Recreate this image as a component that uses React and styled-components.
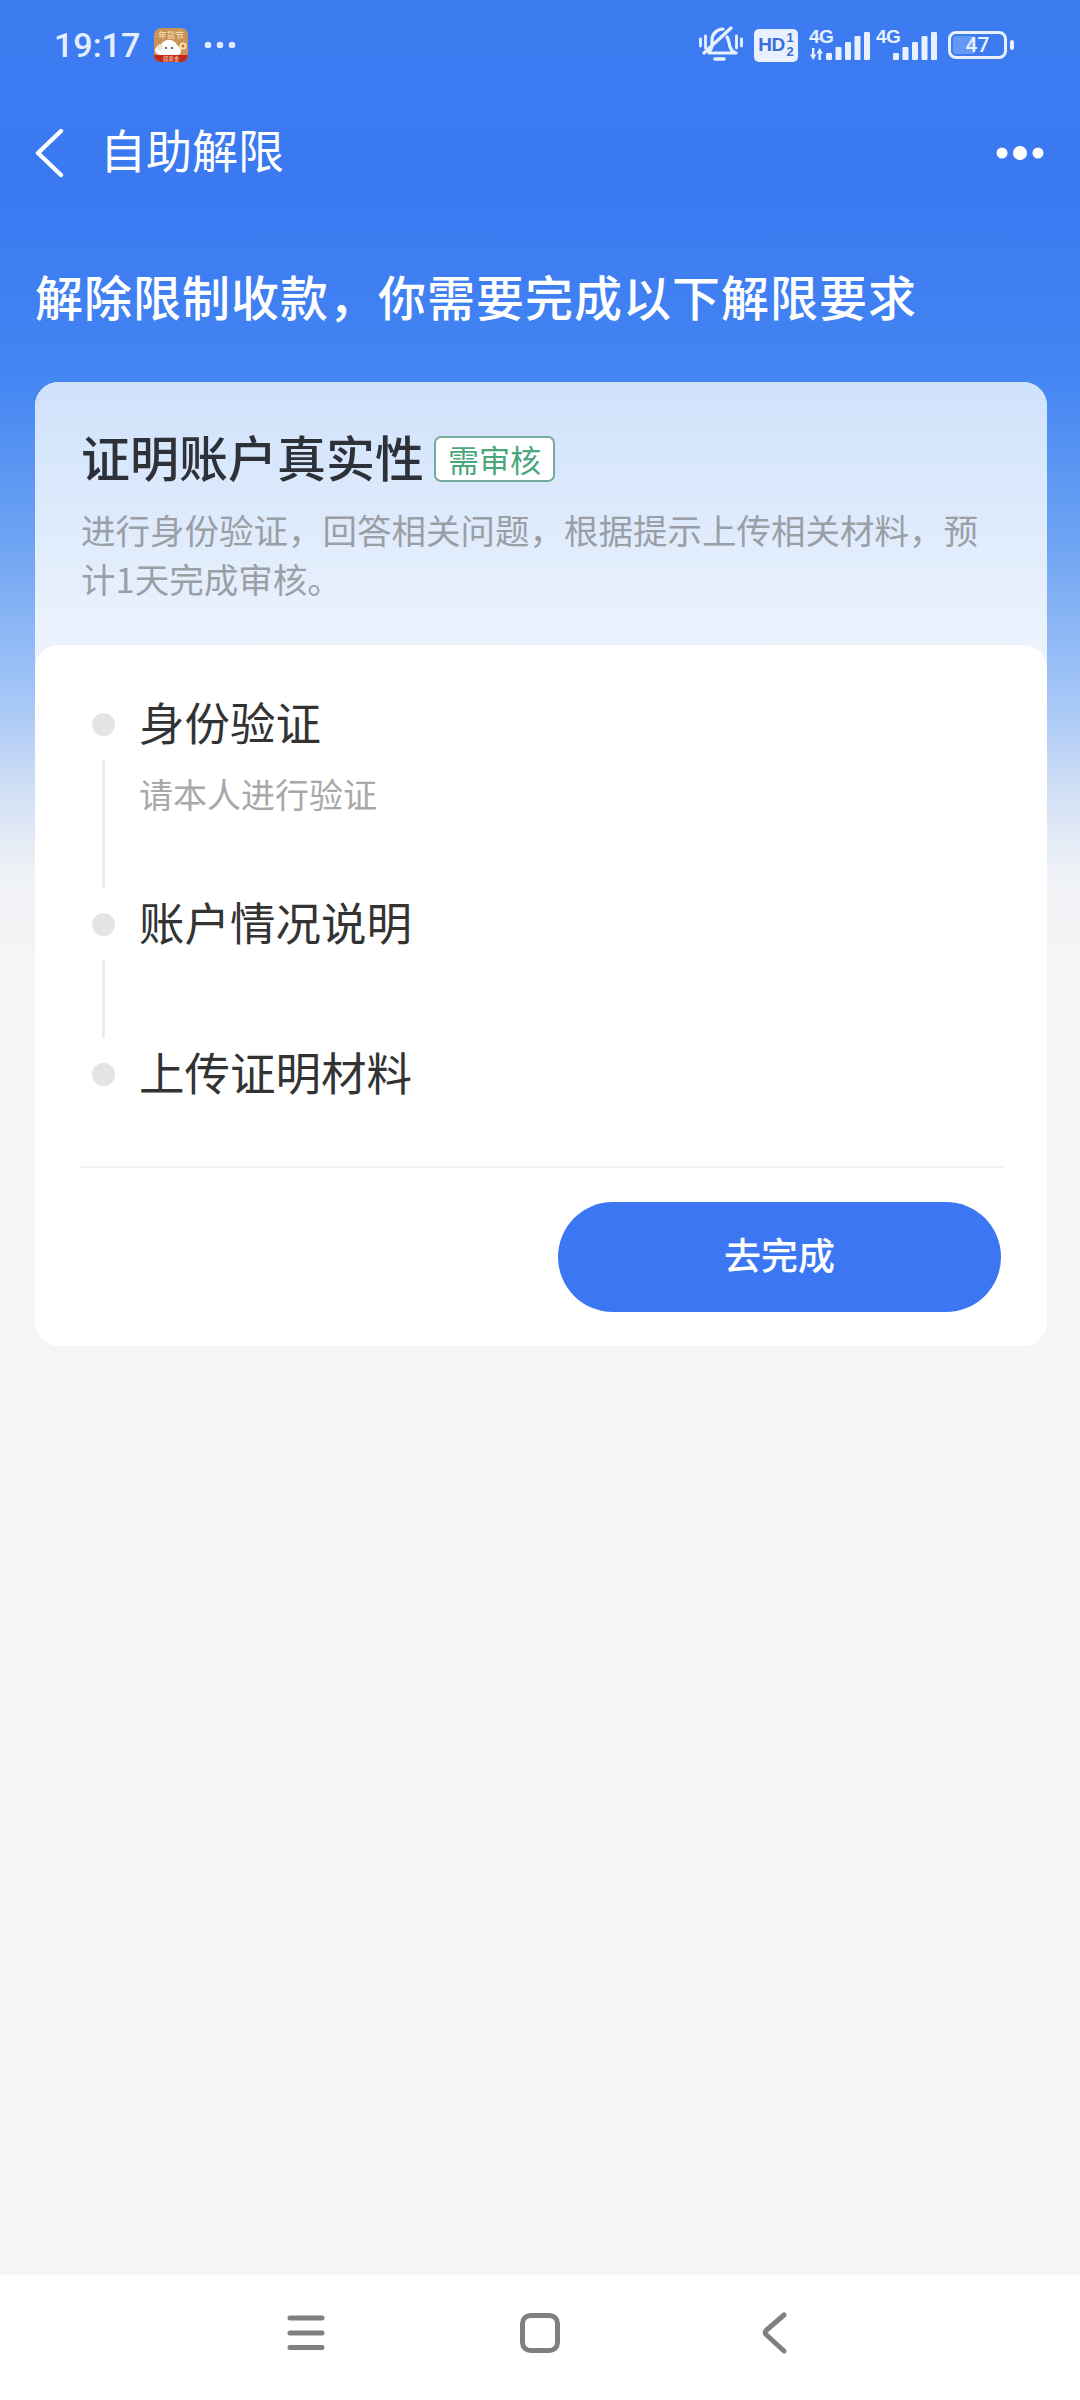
import React from 'react'
import styled, { createGlobalStyle } from 'styled-components'

const GlobalStyle = createGlobalStyle`
  html, body {
    margin: 0;
    padding: 0;
    background: #f5f5f5;
  }
  * {
    box-sizing: border-box;
  }
`

const Page = styled.div`
  width: 1080px;
  height: 2400px;
  display: flex;
  flex-direction: column;
  overflow: hidden;
  font-family: 'Noto Sans CJK SC', 'Noto Sans', sans-serif;
`

const Main = styled.div`
  flex: 1;
  padding: 0 33px 0 35px;
  background: linear-gradient(180deg, #3c7bf0 0, #3b79f1 200px, #4486f3 380px, #6ea4f2 544px, #a8c8f7 707px, #d0dff5 789px, #eef1f6 870px, #f5f5f5 960px);
`

const StatusBar = styled.div`
  height: 90px;
  margin: 0 -33px 0 -35px;
  padding: 0 66px 0 54px;
  display: flex;
  align-items: center;
  justify-content: space-between;
`

const StatusLeft = styled.div`
  display: flex;
  align-items: center;
  gap: 16px;
`

const StatusRight = styled.div`
  display: flex;
  align-items: center;
  gap: 11px;
`

const Time = styled.span`
  font-family: Roboto, sans-serif;
  font-size: 34px;
  font-weight: 500;
  color: #e4eeff;
  margin-right: -2px;
`

const NavBar = styled.div`
  height: 120px;
  display: flex;
  align-items: center;
  justify-content: space-between;
  > svg {
    margin: 6px 3px 0 0;
  }
`

const NavLeft = styled.div`
  display: flex;
  align-items: center;
  gap: 40px;
  margin-left: -1px;
  > svg {
    margin-top: 6px;
  }
`

const NavTitle = styled.h1`
  margin: 0 0 5px -4px;
  font-size: 46px;
  font-weight: 400;
  line-height: 56px;
  color: #fff;
`

const Heading = styled.h2`
  margin: 55px 0 57px;
  font-size: 48px;
  font-weight: 500;
  line-height: 60px;
  letter-spacing: 1px;
  color: #fff;
`

const Card = styled.div`
  width: 1012px;
  border-radius: 24px;
  overflow: hidden;
  background: #fff;
`

const CardHead = styled.div`
  height: 285px;
  margin-bottom: -22px;
  padding: 44px 46px 0;
  background: linear-gradient(180deg, #cfe2fb 0, #eef4fd 100%);
`

const TitleRow = styled.div`
  display: flex;
  align-items: center;
  gap: 10px;
`

const CardTitle = styled.div`
  font-size: 49px;
  font-weight: 500;
  line-height: 60px;
  color: #2e3238;
`

const Tag = styled.span`
  width: 121px;
  height: 46px;
  margin-top: 5px;
  display: flex;
  align-items: center;
  justify-content: center;
  font-size: 31px;
  color: #4aa77c;
  background: #fff;
  border: 2px solid #74ab9a;
  border-radius: 7px;
`

const CardDesc = styled.p`
  margin: 19px 0 0;
  font-size: 34.5px;
  line-height: 49px;
  color: #9a9fa6;
`

const CardBody = styled.div`
  position: relative;
  padding-top: 49px;
  background: #fff;
  border-radius: 24px;
`

const Step = styled.div`
  height: ${p => p.$height}px;
  padding-left: 57px;
  display: flex;
  gap: 24px;
`

const Rail = styled.div`
  width: 23px;
  padding-top: 19px;
  display: flex;
  flex-direction: column;
  align-items: center;
`

const Dot = styled.div`
  width: 23px;
  height: 23px;
  flex: none;
  border-radius: 50%;
  background: #e4e4e4;
`

const RailLine = styled.div`
  flex: 1;
  width: 3px;
  margin: 24px 0 6px;
  background: #ececec;
`

const StepTitle = styled.div`
  font-size: 45.5px;
  line-height: 54px;
  color: #333;
`

const StepSub = styled.div`
  margin-top: 22px;
  font-size: 34px;
  line-height: 48px;
  color: #a8a8a8;
`

const Divider = styled.div`
  height: 2px;
  margin: 0 44px 0 45px;
  background: #f1f1f1;
`

const Footer = styled.div`
  height: 178px;
  padding: 34px 46px 0 0;
  display: flex;
  justify-content: flex-end;
`

const Button = styled.button`
  width: 443px;
  height: 110px;
  padding: 0 0 6px;
  border: 0;
  border-radius: 55px;
  background: #3b77f2;
  color: #fff;
  font-family: inherit;
  font-size: 37px;
  font-weight: 500;
`

const BottomNav = styled.div`
  height: 125px;
  flex: none;
  background: #fff;
  display: flex;
  align-items: center;
  justify-content: center;
  gap: 194px;
  padding-bottom: 8px;
`

const BellIcon = () => (
  <svg width="44" height="38" viewBox="0 0 44 38" fill="none" stroke="#e9f1ff" strokeWidth="3.2" strokeLinecap="round" strokeLinejoin="round">
    <path d="M10 26c2-2 3-4 3-7v-5c0-6 5-11 11-11" />
    <path d="M28 11c2 3 2 6 3 10 1 3 3 5 6 6H10" />
    <path d="M16 33h9" strokeWidth="3.6" />
    <path d="M5 27 32 2" />
    <path d="M1.500 13v7M6.500 10v12M37.500 10v12M42.500 13v7" strokeWidth="2.8" />
  </svg>
)

const HdBadge = styled.div`
  width: 44px;
  height: 33px;
  display: flex;
  align-items: center;
  justify-content: center;
  gap: 2px;
  border-radius: 5px;
  background: #e9f1ff;
  color: #3b6fd8;
  font-family: 'Liberation Sans', sans-serif;
  font-weight: 700;
  font-size: 19px;
  letter-spacing: -0.5px;
`

const HdFraction = styled.span`
  display: flex;
  flex-direction: column;
  font-size: 13px;
  line-height: 14px;
  letter-spacing: 0;
`

const SignalWrap = styled.div`
  position: relative;
  width: 61px;
  height: 34px;
  margin-left: ${p => (p.$tight ? '-5px' : '0')};
`

const SignalLabel = styled.span`
  position: absolute;
  left: 0;
  top: -1px;
  font-family: 'Liberation Sans', sans-serif;
  font-size: 19px;
  line-height: 20px;
  font-weight: 700;
  letter-spacing: -0.5px;
  color: #e9f1ff;
`

const bars = [
  { x: 17, y: 25 },
  { x: 26.5, y: 19 },
  { x: 36, y: 14 },
  { x: 45.5, y: 8 },
  { x: 55, y: 4 },
]

const Signal = ({ arrows, tight }) => (
  <SignalWrap $tight={tight}>
    <svg width="61" height="34" viewBox="0 0 61 34" fill="#e9f1ff">
      {bars.map(b => (
        <rect key={b.x} x={b.x} y={b.y} width="6" height={32 - b.y} rx="1.2" />
      ))}
      {arrows && <path d="M3 20h2.400v6.500h2L4.200 32 1 26.500h2zM9.500 32v-6.500h-2L10.700 20l3.200 5.500h-2V32z" />}
    </svg>
    <SignalLabel>4G</SignalLabel>
  </SignalWrap>
)

const Battery = styled.div`
  position: relative;
  width: 59px;
  height: 28px;
  margin-right: 7px;
  border: 3px solid #e9f1ff;
  border-radius: 8px;
  display: flex;
  align-items: center;
  justify-content: center;
  font-family: Roboto, sans-serif;
  font-size: 21px;
  font-weight: 500;
  color: #e9f1ff;
  &::before {
    content: '';
    position: absolute;
    left: 2px;
    top: 2px;
    bottom: 2px;
    width: 22px;
    border-radius: 3px;
    background: rgba(233, 241, 255, 0.25);
  }
  &::after {
    content: '';
    position: absolute;
    right: -10px;
    top: 6px;
    width: 4px;
    height: 10px;
    border-radius: 2px;
    background: #e9f1ff;
  }
`

const BatteryLevel = styled.span`
  position: relative;
`

const AppIcon = () => (
  <svg width="34" height="34" viewBox="0 0 34 34">
    <defs>
      <clipPath id="app">
        <rect width="34" height="34" rx="7" />
      </clipPath>
    </defs>
    <g clipPath="url(#app)">
      <rect width="34" height="34" fill="#c9935a" />
      <rect y="27" width="34" height="7" fill="#c4281e" />
      <path d="M1 22c1-3 3-5 6-5 1-3 4-5 8-5s7 2 8 5c2 1 4 4 4 6 0 3-2 4-4 4H8c-4 0-7-2-7-5z" fill="#fff" />
      <path d="M3 18c2-2 4-2 6-1l-2 6c-2 0-4-2-4-5z" fill="#eee2d2" />
      <circle cx="12" cy="20" r="1" fill="#333" />
      <circle cx="18" cy="20" r="1" fill="#333" />
      <circle cx="29" cy="18" r="3.600" fill="#f7e3b5" />
      <circle cx="29" cy="18" r="1.500" fill="#d0672a" />
      <text x="17" y="10" textAnchor="middle" fontSize="8.500" fill="#fbe9bd" fontFamily="'Noto Sans CJK SC', sans-serif">年货节</text>
      <text x="17" y="32.500" textAnchor="middle" fontSize="5.500" fill="#fbe0b0" fontFamily="'Noto Sans CJK SC', sans-serif">领黄金</text>
    </g>
  </svg>
)

const MoreDots = () => (
  <svg width="32" height="8" viewBox="0 0 32 8" fill="#dfeaff">
    <circle cx="4" cy="4" r="3.300" />
    <circle cx="16" cy="4" r="3.300" />
    <circle cx="28" cy="4" r="3.300" />
  </svg>
)

const BackIcon = () => (
  <svg width="30" height="50" viewBox="0 0 30 50" fill="none" stroke="#fff" strokeWidth="4.400" strokeLinecap="round" strokeLinejoin="round">
    <path d="M27 3 4 25l23 22" />
  </svg>
)

const MenuIcon = () => (
  <svg width="48" height="16" viewBox="0 0 48 16" fill="#fff">
    <circle cx="6" cy="8" r="5.500" />
    <circle cx="24" cy="8" r="7" />
    <circle cx="42" cy="8" r="5.500" />
  </svg>
)

const NavMenuIcon = () => (
  <svg width="40" height="48" viewBox="0 0 40 48" fill="none" stroke="#808080" strokeWidth="5" strokeLinecap="round">
    <path d="M4 8h32M4 23h32M4 37.500h32" />
  </svg>
)

const NavHomeIcon = () => (
  <svg width="40" height="48" viewBox="0 0 40 48" fill="none" stroke="#808080" strokeWidth="5">
    <rect x="2.500" y="5.500" width="35" height="35" rx="8" />
  </svg>
)

const NavBackIcon = () => (
  <svg width="40" height="48" viewBox="0 0 40 48" fill="none" stroke="#808080" strokeWidth="5" strokeLinecap="round" strokeLinejoin="round">
    <path d="M30 5 12 20.500c-1 1-1 3 0 4L30 41" />
  </svg>
)

const steps = [
  { title: '身份验证', sub: '请本人进行验证', height: 200, line: true },
  { title: '账户情况说明', height: 150, line: true },
  { title: '上传证明材料', height: 122 },
]

const App = () => (
  <Page>
    <GlobalStyle />
    <Main>
      <StatusBar>
        <StatusLeft>
          <Time>19:17</Time>
          <AppIcon />
          <MoreDots />
        </StatusLeft>
        <StatusRight>
          <BellIcon />
          <HdBadge>
            HD
            <HdFraction>
              <span>1</span>
              <span>2</span>
            </HdFraction>
          </HdBadge>
          <Signal arrows />
          <Signal tight />
          <Battery>
            <BatteryLevel>47</BatteryLevel>
          </Battery>
        </StatusRight>
      </StatusBar>

      <NavBar>
        <NavLeft>
          <BackIcon />
          <NavTitle>自助解限</NavTitle>
        </NavLeft>
        <MenuIcon />
      </NavBar>

      <Heading>解除限制收款，你需要完成以下解限要求</Heading>

      <Card>
        <CardHead>
          <TitleRow>
            <CardTitle>证明账户真实性</CardTitle>
            <Tag>需审核</Tag>
          </TitleRow>
          <CardDesc>进行身份验证，回答相关问题，根据提示上传相关材料，预计1天完成审核。</CardDesc>
        </CardHead>
        <CardBody>
          {steps.map(s => (
            <Step key={s.title} $height={s.height}>
              <Rail>
                <Dot />
                {s.line && <RailLine />}
              </Rail>
              <div>
                <StepTitle>{s.title}</StepTitle>
                {s.sub && <StepSub>{s.sub}</StepSub>}
              </div>
            </Step>
          ))}
          <Divider />
          <Footer>
            <Button>去完成</Button>
          </Footer>
        </CardBody>
      </Card>
    </Main>
    <BottomNav>
      <NavMenuIcon />
      <NavHomeIcon />
      <NavBackIcon />
    </BottomNav>
  </Page>
)

export default App
